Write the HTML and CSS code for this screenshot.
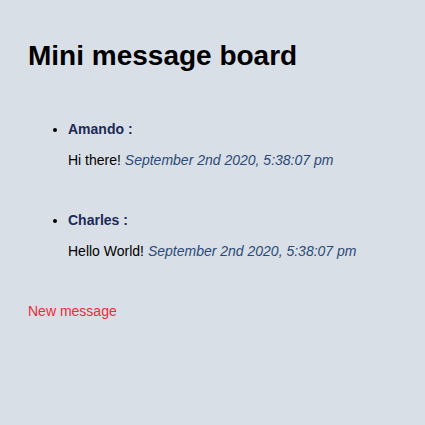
FILE: index.html
```html
<!DOCTYPE html>
<html lang="en">
<head>
<meta charset="utf-8">
<title>Mini message board</title>
<link rel="stylesheet" href="styles.css">
</head>
<body>
  <h1 class="title">Mini message board</h1>
  <ul class="messages">
    <li class="message">
      <div class="user">Amando :</div>
      <p class="text">Hi there! <span class="date">September 2nd 2020, 5:38:07 pm</span></p>
    </li>
    <li class="message">
      <div class="user">Charles :</div>
      <p class="text">Hello World! <span class="date">September 2nd 2020, 5:38:07 pm</span></p>
    </li>
  </ul>
  <a class="new-link" href="#">New message</a>
</body>
</html>
```

FILE: styles.css
```css
html, body {
  margin: 0;
  background: #d9dfe6;
}
body {
  padding: 20px 28px;
  font-family: "Liberation Sans", Arial, sans-serif;
  font-size: 14px;
  color: #000;
}
.title {
  font-size: 28px;
  font-weight: bold;
  margin: 20px 0 0;
  line-height: 32px;
}
.messages {
  margin: 49px 0 0;
  padding-left: 40px;
}
.message {
  padding-bottom: 44px;
}
.user {
  font-weight: bold;
  color: #1b2957;
  line-height: 16px;
}
.text {
  margin: 15px 0 0;
  line-height: 16px;
}
.date {
  font-style: italic;
  color: #2b4a78;
}
.new-link {
  display: block;
  color: #ec2b3b;
  text-decoration: none;
  line-height: 16px;
}
```
